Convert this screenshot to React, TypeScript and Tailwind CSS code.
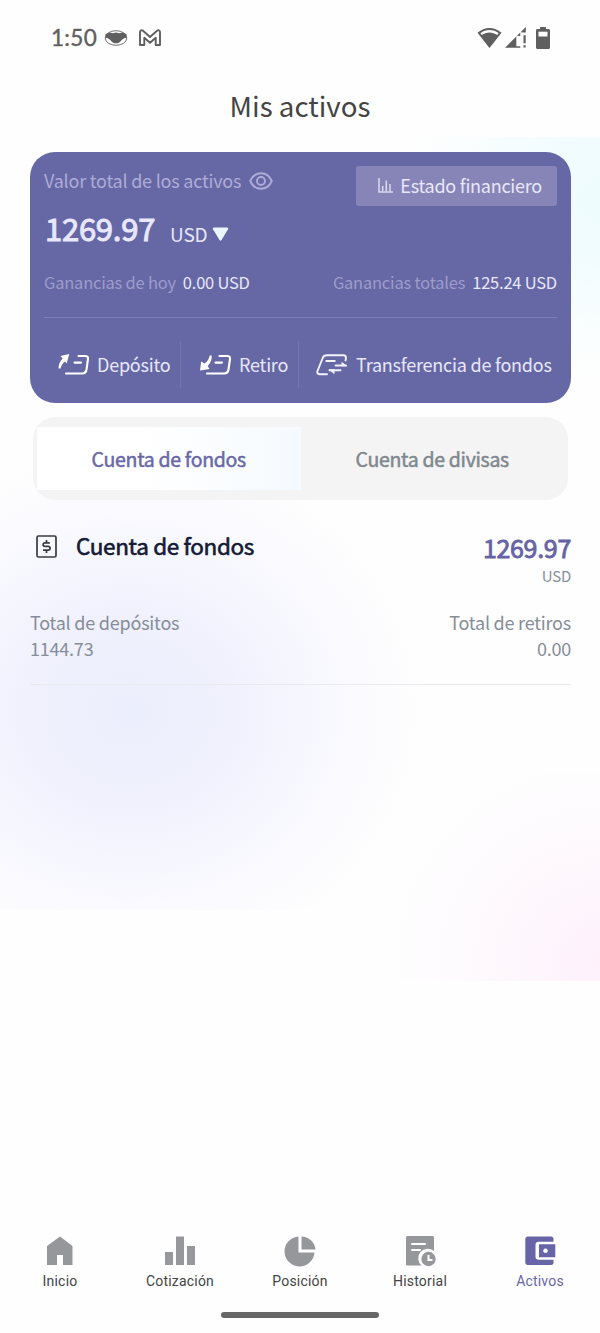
import type { ReactNode } from "react";
import clsx from "clsx";

interface NavItemType {
    label: string
    icon: ReactNode
    active?: boolean
}

const StatusBar = () => {
    return (
        <div className="flex h-[75px] items-center justify-between pl-[51px] pr-[50px] text-[#5f5f5f]">
            <div className="flex items-center">
                <span className="w-[53px] font-['Lato',sans-serif] text-[22.5px] leading-6 tracking-[0.3px] [-webkit-text-stroke:0.4px]">1:50</span>
                <svg width="24" height="18" viewBox="0 0 24 18" className="mr-[10px]">
                    <ellipse cx="12" cy="9" rx="10.8" ry="7.3" fill="none" stroke="currentColor" strokeWidth="0.9" />
                    <path d="M1.500 5.200C5 3.200 7 3.500 9.500 4.200 11 3.300 13 3.300 14.500 4.200 17 3.500 19 3.200 22.500 5.200V8.400C20.500 9 19 9.500 17.700 11 16 13.500 14.500 14.300 12 14.300S8 13.500 6.300 11C5 9.500 3.500 9 1.500 8.400Z" fill="currentColor" />
                </svg>
                <svg width="24" height="20" viewBox="0 0 24 20" fill="none" stroke="currentColor" strokeWidth="1.900" strokeLinejoin="round">
                    <path d="M2 17V4C2 2.200 3.700 1.700 5 2.800L12 9l7-6.200c1.300-1.100 3-.6 3 1.200v13h-4.300V9.800L12 14.700 6.300 9.800V17Z" />
                </svg>
            </div>
            <div className="flex items-center">
                <svg width="25" height="22" viewBox="0 0 25 22" className="mr-[3px]">
                    <path d="M.5 5.800C7.500-.5 17.500-.5 24.500 5.800L12.500 21Z" fill="currentColor" />
                    <path d="M3.300 6.300C8.800 1.900 16.200 1.900 21.700 6.300L20.200 8.100C15.500 4.500 9.500 4.500 4.800 8.100Z" fill="#fff" />
                </svg>
                <svg width="22" height="22" viewBox="0 0 22 22" className="mr-[9px]">
                    <path d="M0 20.800 15.300 5.500V9H11.300V19.200H15.300V20.800ZM16.300 4.500 20.800 0V5.500H16.300Z" fill="currentColor" />
                    <path d="M18.500 8.300h2.200v7.900h-2.200ZM18.500 18.200h2.200v2.400h-2.200Z" fill="currentColor" />
                </svg>
                <svg width="14" height="22" viewBox="0 0 14 22">
                    <path d="M4 0h6v2h2.500c.8 0 1.500.7 1.500 1.500v17c0 .8-.7 1.500-1.500 1.500h-11C.7 22 0 21.300 0 20.500v-17C0 2.700.7 2 1.500 2H4Z" fill="currentColor" />
                    <rect x="2.500" y="4.700" width="9" height="4.800" fill="#fff" />
                </svg>
            </div>
        </div>
    )
}

const DepositIcon = () => (
    <svg width="33" height="22" viewBox="0 0 33 22" fill="none" stroke="#fff" strokeWidth="2.100" strokeLinecap="round">
        <path d="M3.500 2 12.300 0 9.700 9.500 8 7.500C5.500 9.500 4 12 3.500 14.500L1.500 14.500C1.500 10.500 3 7 5.700 4.500Z" fill="#fff" stroke="none" />
        <path d="M21.500 2H28C30.300 2 31.300 3 31 5L29.500 15.500C29.200 18 27.500 19.500 25 19.500H9M17.500 8.600h6.500" />
    </svg>
)

const WithdrawIcon = () => (
    <svg width="33" height="22" viewBox="0 0 33 22" fill="none" stroke="#fff" strokeWidth="2.100" strokeLinecap="round">
        <path d="M10.700 1.500H12.700C13 5.500 11.500 9 8.700 12L10.500 15 1 16.500 2.200 7.500 5.500 9.500C8.500 7.500 10 5 10.700 1.500Z" fill="#fff" stroke="none" />
        <path d="M20.500 2H28C30.300 2 31.300 3 31 5L29.500 15.500C29.200 18 27.500 19.500 25 19.500H8M16.500 8.600h6.500" />
    </svg>
)

const TransferIcon = () => (
    <svg width="32" height="22" viewBox="0 0 32 22" fill="none" stroke="#f3f2ff" strokeWidth="1.900" strokeLinecap="round">
        <path d="M29.500 6.500 30 4C30 2.200 29 1.300 27.500 1.300H11C8.800 1.300 7.500 2 6.700 4L1.500 17C.8 19 1.800 20.200 4 20.200H11M10.300 7h8.500" />
        <path d="M19.500 11.500H30M24.500 16.300H13.500" />
        <path d="M25.500 7.800 31.500 12.300H25.500ZM18.500 20.200 12.500 15.500H18.500Z" fill="#f3f2ff" stroke="none" />
    </svg>
)

const AssetCard = () => {
    return (
        <section className="ml-[30px] mr-[29px] mt-[14px] h-[251px] rounded-[25px] bg-[#6667a5] px-[14px] text-[#e8e7fb]">
            <div className="flex justify-between">
                <div className="pt-[17px]">
                    <div className="flex h-6 items-center text-[18px] tracking-[-0.22px] text-[#aeacd6]">
                        <span className="pb-px">Valor total de los activos</span>
                        <svg width="24" height="18" viewBox="0 0 24 18" fill="none" stroke="currentColor" strokeWidth="1.900" className="ml-2">
                            <path d="M1.200 9C6-1.400 18-1.400 22.800 9 18 19.400 6 19.400 1.200 9Z" />
                            <circle cx="12" cy="9" r="4" />
                        </svg>
                    </div>
                    <div className="mt-[15px] flex h-10 items-center">
                        <span className="pl-px text-[31px] tracking-[-0.25px] [-webkit-text-stroke:1px]">1269.97</span>
                        <span className="ml-[15px] mt-3 text-[19px] tracking-[-0.2px]">USD</span>
                        <svg width="17" height="14" viewBox="0 0 16 14" className="ml-[5px] mt-[11px]">
                            <path d="M1.500.5h13c1 0 1.500.8 1 1.700L9 13c-.6.900-1.400.9-2 0L.5 2.200C0 1.300.5.500 1.500.5Z" fill="#e9f6fb" />
                        </svg>
                    </div>
                </div>
                <button className="mt-[14px] flex h-10 w-[201px] items-center justify-end rounded-[3px] bg-[#8785b7] pb-[2px] pr-[15px] text-[18px] tracking-[-0.25px]">
                    <svg width="15" height="15" viewBox="0 0 15 15" fill="none" stroke="#dcdaf0" strokeWidth="1.500" className="mr-[7px]">
                        <path d="M1 0v14h14M4.700 13V8M8.300 13V2.500M12 13V6" />
                    </svg>
                    Estado financiero
                </button>
            </div>
            <div className="mt-[22px] flex h-6 items-center justify-between text-[16.500px] tracking-[-0.22px]">
                <p><span className="mr-[7px] text-[#9d9ccc]">Ganancias de hoy</span>0.00 USD</p>
                <p><span className="mr-[7px] text-[#9d9ccc]">Ganancias totales</span>125.24 USD</p>
            </div>
            <div className="mt-[23px] h-px bg-[#7d7db5]" />
            <div className="mt-[23px] flex h-[47px] items-center text-[18px] tracking-[-0.22px]">
                <div className="flex h-full w-[137px] items-center border-r border-[#7675b0] pl-[13px]">
                    <DepositIcon />
                    <span className="mb-px ml-[7px]">Depósito</span>
                </div>
                <div className="flex h-full w-[118px] items-center border-r border-[#7675b0] pl-[18px]">
                    <WithdrawIcon />
                    <span className="mb-px ml-[7px]">Retiro</span>
                </div>
                <div className="flex items-center whitespace-nowrap pl-[17px]">
                    <TransferIcon />
                    <span className="mb-px ml-2">Transferencia de fondos</span>
                </div>
            </div>
        </section>
    )
}

const AccountTabs = () => {
    return (
        <div className="ml-[33px] mr-8 mt-[14px] flex h-[83px] rounded-[22px] bg-[#f4f4f4] px-1 py-[10px] text-[19.500px] tracking-[-0.300px] [-webkit-text-stroke:0.500px]">
            <button className="flex-1 bg-linear-to-r from-white from-40% to-[#f5fafe] text-[#6a68a8]">Cuenta de fondos</button>
            <button className="flex-1 text-[#7f888e]">Cuenta de divisas</button>
        </div>
    )
}

const AccountDetail = () => {
    return (
        <section className="ml-[30px] mr-[29px] border-b border-[#e9e9ef] text-[18px] tracking-[-0.22px] text-[#868d98]">
            <div className="flex h-[106px] justify-between">
                <div className="flex h-[92px] items-center pl-[6px]">
                    <svg width="21" height="23" viewBox="0 0 21 23" fill="none" stroke="#3a3a42" strokeWidth="1.700">
                        <rect x="1" y="1" width="19" height="21" rx="1.500" />
                        <path d="M13.800 7.800H9C6.500 7.800 6.500 11.300 9 11.300h3.200c2.500 0 2.500 3.800 0 3.800H7M10.500 5v2.500M10.500 15.300V18" />
                    </svg>
                    <span className="ml-[19px] text-[22.500px] tracking-[-0.350px] text-[#141a33] [-webkit-text-stroke:0.600px]">Cuenta de fondos</span>
                </div>
                <div className="pt-[30px] text-right">
                    <p className="text-[25px] leading-[34px] tracking-[-0.300px] text-[#6563a5] [-webkit-text-stroke:0.800px]">1269.97</p>
                    <p className="pt-px text-[15px] leading-[22px]">USD</p>
                </div>
            </div>
            <div className="flex h-[78px] justify-between pt-[3px] leading-[26px]">
                <div>
                    <p>Total de depósitos</p>
                    <p>1144.73</p>
                </div>
                <div className="text-right">
                    <p>Total de retiros</p>
                    <p>0.00</p>
                </div>
            </div>
        </section>
    )
}

const navItems: NavItemType[] = [
    {
        label: "Inicio",
        icon: <path d="M3 11 16 1.500 28.500 11V30H19V20h-6v10H3Z" />,
    },
    {
        label: "Cotización",
        icon: <path d="M1 17h8v13H1ZM12 1.500h8V30h-8ZM23 11h8v19h-8Z" />,
    },
    {
        label: "Posición",
        icon: <path d="M14.500 1.500V17.500H30.500A15 15 0 1 1 14.500 1.500ZM17.500 1.500A14.500 14.500 0 0 1 31.500 14.500h-14Z" />,
    },
    {
        label: "Historial",
        icon: (
            <>
                <path d="M3.500 1h25c1 0 1.500.5 1.500 1.500V16A9 9 0 0 0 17.500 30.500h-14c-1 0-1.500-.5-1.500-1.500V2.500C2 1.500 2.500 1 3.500 1Z" />
                <path d="M8 9h13M8 15h8" stroke="#fff" strokeWidth="2" strokeLinecap="round" />
                <circle cx="24.500" cy="24" r="9" fill="#fefefe" />
                <circle cx="24.500" cy="24" r="7.200" />
                <path d="M24.500 20v5h4" fill="none" stroke="#fff" strokeWidth="2" />
            </>
        ),
    },
    {
        label: "Activos",
        active: true,
        icon: (
            <>
                <path d="M4 1.500h23c1.700 0 2.500 1 2.500 2.500v2.700H15c-2.500 0-3.500 1-3.500 3.300v11.500c0 2.300 1 3.300 3.500 3.300h14.500V27.500c0 1.500-.8 2.500-2.500 2.500H4c-1.700 0-2.700-1-2.700-2.700V4.200C1.300 2.500 2.300 1.500 4 1.500Z" />
                <path fillRule="evenodd" d="M15 9.300H31.300V22.300H15ZM21.500 13.500a2.300 2.300 0 1 0 .01 0Z" />
            </>
        ),
    },
]

const BottomNav = () => {
    return (
        <nav className="mt-auto">
            <ul className="flex h-[60px]">
                {navItems.map(({ label, icon, active }) => (
                    <li key={label} className={clsx("flex flex-1 flex-col items-center font-['Roboto',sans-serif] text-[14px] leading-5 tracking-[0.2px]", active ? "text-[#6765a8]" : "text-[#444]")}>
                        <svg width="32" height="32" viewBox="0 0 32 32" className={clsx("mb-1", active ? "fill-[#6765a8]" : "fill-[#96979b]")}>
                            {icon}
                        </svg>
                        {label}
                    </li>
                ))}
            </ul>
            <div className="mx-auto mb-[15px] mt-[17px] h-[6px] w-[158px] rounded-full bg-[#666]" />
        </nav>
    )
}

const App = () => {
    return (
        <main className="h-[1333px] w-[600px] bg-[#fefefe] font-['Noto_Sans_CJK_SC',sans-serif]">
            <div className="flex h-full flex-col bg-[image:radial-gradient(ellipse_200px_180px_at_200px_63px,#eefcfe,#f2fcfe_35%,#fafefe_75%,transparent),radial-gradient(ellipse_295px_265px_at_130px_290px,#ebeefc,#f0f1fd_35%,#fafaff_75%,transparent),radial-gradient(ellipse_220px_210px_at_220px_190px,#fef1fc,#fef7fd_40%,#fefcfe_75%,transparent)] bg-[size:200px_243px,420px_490px,220px_211px] bg-[position:400px_137px,0_420px,380px_770px] bg-no-repeat">
                <StatusBar />
                <h1 className="h-[63px] text-center text-[27.700px] leading-[61px] text-[#444]">Mis activos</h1>
                <AssetCard />
                <AccountTabs />
                <AccountDetail />
                <BottomNav />
            </div>
        </main>
    )
}

export default App;
